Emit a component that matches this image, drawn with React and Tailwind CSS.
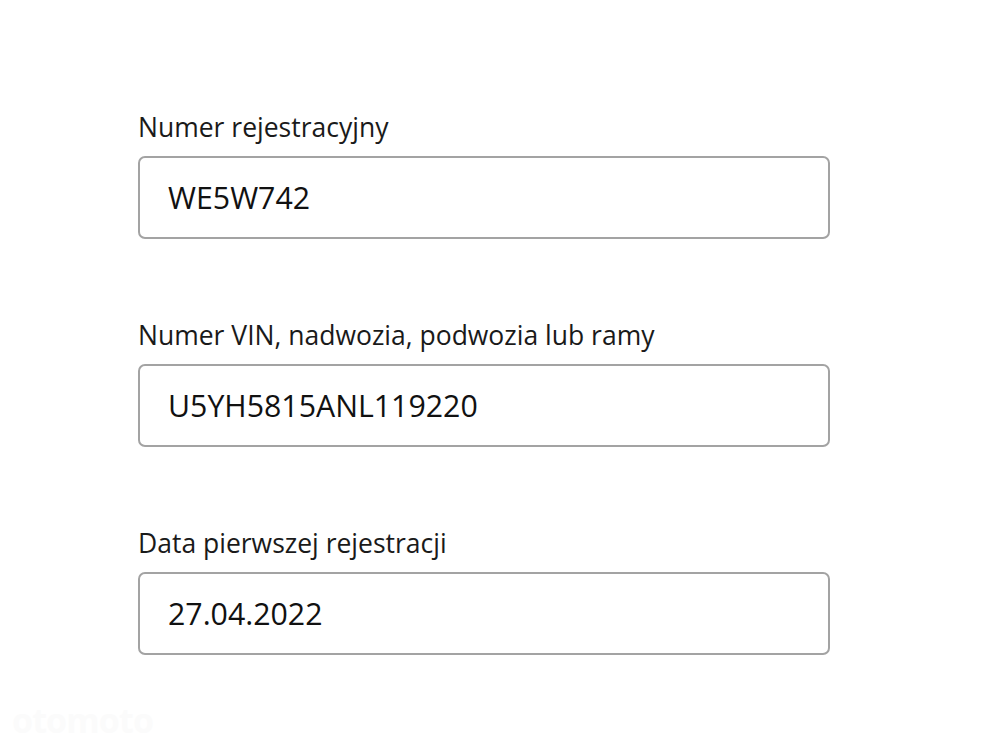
export default function App() {
  const fields = [
    ["Numer rejestracyjny", "WE5W742"],
    ["Numer VIN, nadwozia, podwozia lub ramy", "U5YH5815ANL119220"],
    ["Data pierwszej rejestracji", "27.04.2022"],
  ];
  return (
    <div className="w-[1000px] h-[750px] bg-white relative overflow-hidden" style={{ fontFamily: '"Open Sans", "Noto Sans", sans-serif' }}>
      <div className="pt-[112px] pl-[138px] flex flex-col gap-[81px]">
        {fields.map(([label, value]) => (
          <div key={label} className="flex flex-col">
            <div className="text-[26.5px] leading-[30px] text-[#1a1a1a] mb-[14px]">{label}</div>
            <div className="w-[692px] h-[83px] border-2 border-[#a3a3a3] rounded-[7px] flex items-center pl-[28px] text-[30.3px] text-[#111]">
              {value}
            </div>
          </div>
        ))}
      </div>
      <div className="absolute left-[12px] bottom-[4px] text-[34px] font-bold text-[#fbfbfb] tracking-tight">otomoto</div>
    </div>
  );
}
